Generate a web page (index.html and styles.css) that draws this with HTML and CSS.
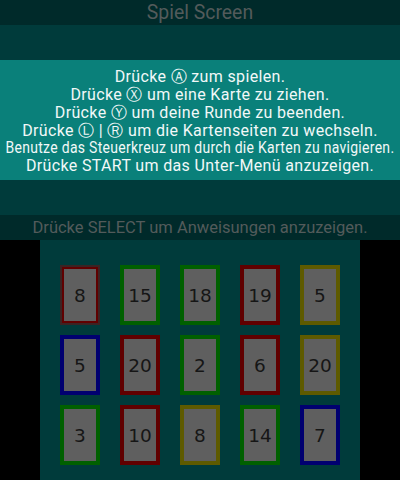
FILE: index.html
```html
<!DOCTYPE html>
<html>
<head>
<meta charset="utf-8">
<link rel="stylesheet" href="styles.css">
</head>
<body>
<div class="top">
  <div class="bar title">Spiel Screen</div>
  <div class="gap"></div>
  <div class="panel">
    <div class="line">Drücke Ⓐ zum spielen.</div>
    <div class="line">Drücke Ⓧ um eine Karte zu ziehen.</div>
    <div class="line">Drücke Ⓨ um deine Runde zu beenden.</div>
    <div class="line">Drücke Ⓛ | Ⓡ um die Kartenseiten zu wechseln.</div>
    <div class="line squeeze">Benutze das Steuerkreuz um durch die Karten zu navigieren.</div>
    <div class="line">Drücke START um das Unter-Menü anzuzeigen.</div>
  </div>
  <div class="gap"></div>
  <div class="bar hint">Drücke SELECT um Anweisungen anzuzeigen.</div>
</div>
<div class="bottom">
  <div class="screen">
    <div class="card red sel">8</div>
    <div class="card green">15</div>
    <div class="card green">18</div>
    <div class="card red">19</div>
    <div class="card olive">5</div>
    <div class="card blue">5</div>
    <div class="card red">20</div>
    <div class="card green">2</div>
    <div class="card red">6</div>
    <div class="card olive">20</div>
    <div class="card green">3</div>
    <div class="card red">10</div>
    <div class="card olive">8</div>
    <div class="card green">14</div>
    <div class="card blue">7</div>
  </div>
</div>
</body>
</html>
```
FILE: styles.css
```css
html, body {
  margin: 0;
  padding: 0;
  background: #000;
}
body {
  width: 400px;
  height: 480px;
  font-family: "Roboto", "DejaVu Sans", sans-serif;
  overflow: hidden;
}
.top {
  height: 240px;
  background: #003b3b;
  display: flex;
  flex-direction: column;
}
.bar {
  height: 25px;
  background: #002a2a;
  color: #535b5b;
  display: flex;
  align-items: center;
  justify-content: center;
  flex: none;
}
.title {
  font-size: 19.4px;
}
.hint {
  font-size: 16.5px;
}
.gap {
  height: 35px;
  flex: none;
}
.panel {
  height: 120px;
  flex: none;
  box-sizing: border-box;
  padding-top: 3px;
  background: #0a807a;
  color: #f2f8f8;
  font-size: 16px;
  letter-spacing: 0.35px;
  line-height: 17.8px;
  white-space: nowrap;
  display: flex;
  flex-direction: column;
  justify-content: center;
  align-items: center;
  overflow: hidden;
}
.line {
  flex: none;
}
.squeeze {
  transform: scaleX(0.872);
  transform-origin: center;
}
.bottom {
  height: 240px;
  background: #000;
}
.screen {
  width: 320px;
  height: 240px;
  margin: 0 auto;
  background: #003b3b;
  box-sizing: border-box;
  padding: 25px 0 0 20px;
  display: grid;
  grid-template-columns: repeat(5, 40px);
  grid-auto-rows: 60px;
  column-gap: 20px;
  row-gap: 10px;
  align-content: start;
}
.card {
  box-sizing: border-box;
  border: 4px solid;
  background: #5f5f5f;
  color: #161616;
  font-family: "DejaVu Sans", sans-serif;
  font-size: 18.5px;
  display: flex;
  align-items: center;
  justify-content: center;
}
.red { border-color: #600000; }
.green { border-color: #006000; }
.blue { border-color: #000070; }
.olive { border-color: #5e5a00; }
.card.sel {
  border-width: 2px;
  outline: 2px solid #3a2424;
  outline-offset: 0;
  margin: 2px;
}
```
